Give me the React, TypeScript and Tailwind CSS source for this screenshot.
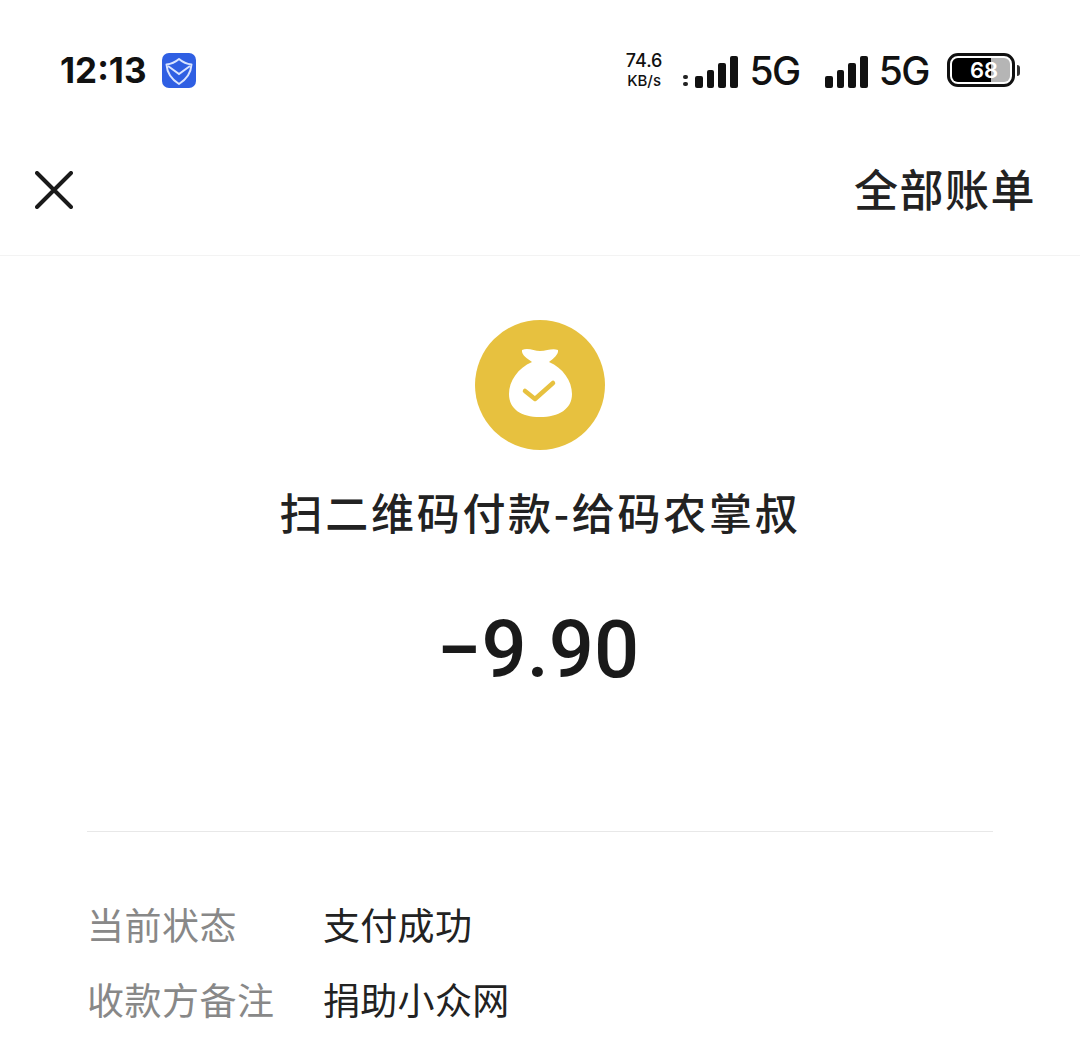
import React from 'react'

const CJK = { fontFamily: '"Noto Sans CJK SC", "Noto Sans", sans-serif' }
const LATIN = { fontFamily: 'Inter, "Liberation Sans", sans-serif' }

const SignalBars = () => (
  <svg className="mt-[3px]" width="43" height="32" viewBox="0 0 43 32" fill="#111">
    <rect x="0" y="20" width="8" height="12" rx="2" />
    <rect x="12" y="14" width="7" height="18" rx="2" />
    <rect x="23" y="7" width="8" height="25" rx="2" />
    <rect x="35" y="0" width="8" height="32" rx="2" />
  </svg>
)

const ShieldLogo = () => (
  <svg width="34" height="35" viewBox="0 0 34 35">
    <rect width="34" height="35" rx="7" fill="#2f5fe3" />
    <path d="M17 6c3.500 3 8 5 12.500 5.500C29 19 25 26 17 31 9 26 5 19 4.500 11.500 9 11 13.500 9 17 6z" fill="none" stroke="#d9e4ff" strokeWidth="2" strokeLinejoin="round" />
    <path d="M6 13l11 8 11-8" fill="none" stroke="#d9e4ff" strokeWidth="2" />
  </svg>
)

const Battery = () => (
  <div className="flex items-center gap-[2px]">
    <div className="w-[68px] h-[34px] rounded-[11px] border-[3px] border-[#111] p-[2px]">
      <div className="relative h-full rounded-[6px] overflow-hidden bg-[#b5b5b5]">
        <div className="h-full w-[68%] bg-black" />
        <span className="absolute inset-0 flex items-center justify-center pl-[6px] text-white text-[22px] font-semibold leading-none" style={LATIN}>68</span>
      </div>
    </div>
    <div className="w-[3px] h-[11px] rounded-r-sm bg-[#333]" />
  </div>
)

const MoneyBag = () => (
  <svg width="130" height="130" viewBox="0 0 130 130">
    <circle cx="65" cy="65" r="65" fill="#e7c13f" />
    <path d="M47 30c6-3 12 1 18 1 7 0 12-3 18-1 1 4-5 9-9 12 14 6 23 19 23 32 0 15-13 23-32 23-19 0-31-8-31-23 0-13 9-26 23-32-4-3-11-7-10-12z" fill="#fff" />
    <path d="M50 71l10 8 18-16" fill="none" stroke="#e7c13f" strokeWidth="4.500" strokeLinecap="round" strokeLinejoin="round" />
  </svg>
)

const InfoRow = ({ label, value }: { label: string; value: string }) => (
  <div className="flex items-center h-[75px]">
    <span className="w-[236px] text-[#888] text-[37px] leading-none tracking-[0.5px]">{label}</span>
    <span className="text-[#222] text-[37px] leading-none tracking-[0.3px]">{value}</span>
  </div>
)

export default function App() {
  return (
    <div className="w-[1080px] h-[1039px] bg-white overflow-hidden" style={CJK}>
      {/* Status bar */}
      <div className="h-[140px] pl-[60px] pr-[60px] flex items-center justify-between">
        <div className="flex items-center gap-[15px]">
          <span className="text-[35px] font-bold text-[#111] leading-none" style={LATIN}>12:13</span>
          <ShieldLogo />
        </div>
        <div className="flex items-center" style={LATIN}>
          <div className="flex flex-col items-center text-[#111] leading-none mr-[21px]">
            <span className="text-[18px] font-medium">74.6</span>
            <span className="text-[15px] font-medium mt-[3px]">KB/s</span>
          </div>
          <div className="flex flex-col gap-[3px] mr-[7px] mt-[20px]">
            <div className="w-[5px] h-[4px] bg-[#222] rounded-sm" />
            <div className="w-[5px] h-[4px] bg-[#222] rounded-sm" />
          </div>
          <SignalBars />
          <span className="text-[39px] font-medium text-[#111] leading-none ml-[11px] mr-[25px] tracking-[-1.5px]">5G</span>
          <SignalBars />
          <span className="text-[39px] font-medium text-[#111] leading-none ml-[11px] mr-[18px] tracking-[-1.5px]">5G</span>
          <Battery />
        </div>
      </div>

      {/* Nav */}
      <div className="h-[116px] pb-[16px] pl-[35px] pr-[44px] flex items-center justify-between border-b border-[#f3f3f3]">
        <svg width="38" height="38" viewBox="0 0 38 38" fill="none" stroke="#1a1a1a" strokeWidth="4" strokeLinecap="round">
          <path d="M2 2l34 34M36 2L2 36" />
        </svg>
        <span className="text-[44px] leading-none text-[#222] font-medium tracking-[1.5px] mb-[4px]">全部账单</span>
      </div>

      {/* Summary */}
      <div className="flex flex-col items-center pt-[64px]">
        <MoneyBag />
        <h1 className="mt-[34px] text-[43px] leading-[54px] font-medium text-[#222] tracking-[2.7px]">扫二维码付款-给码农掌叔</h1>
        <div className="mt-[72px] mr-[4px] text-[79.5px] leading-none font-medium text-[#1a1a1a]" style={{ fontFamily: 'Roboto, sans-serif' }}>−9.90</div>
      </div>

      {/* Details */}
      <div className="mx-[87px] mt-[141px] border-t border-[#e8e8e8] pt-[55px]">
        <InfoRow label="当前状态" value="支付成功" />
        <InfoRow label="收款方备注" value="捐助小众网" />
      </div>
    </div>
  )
}
